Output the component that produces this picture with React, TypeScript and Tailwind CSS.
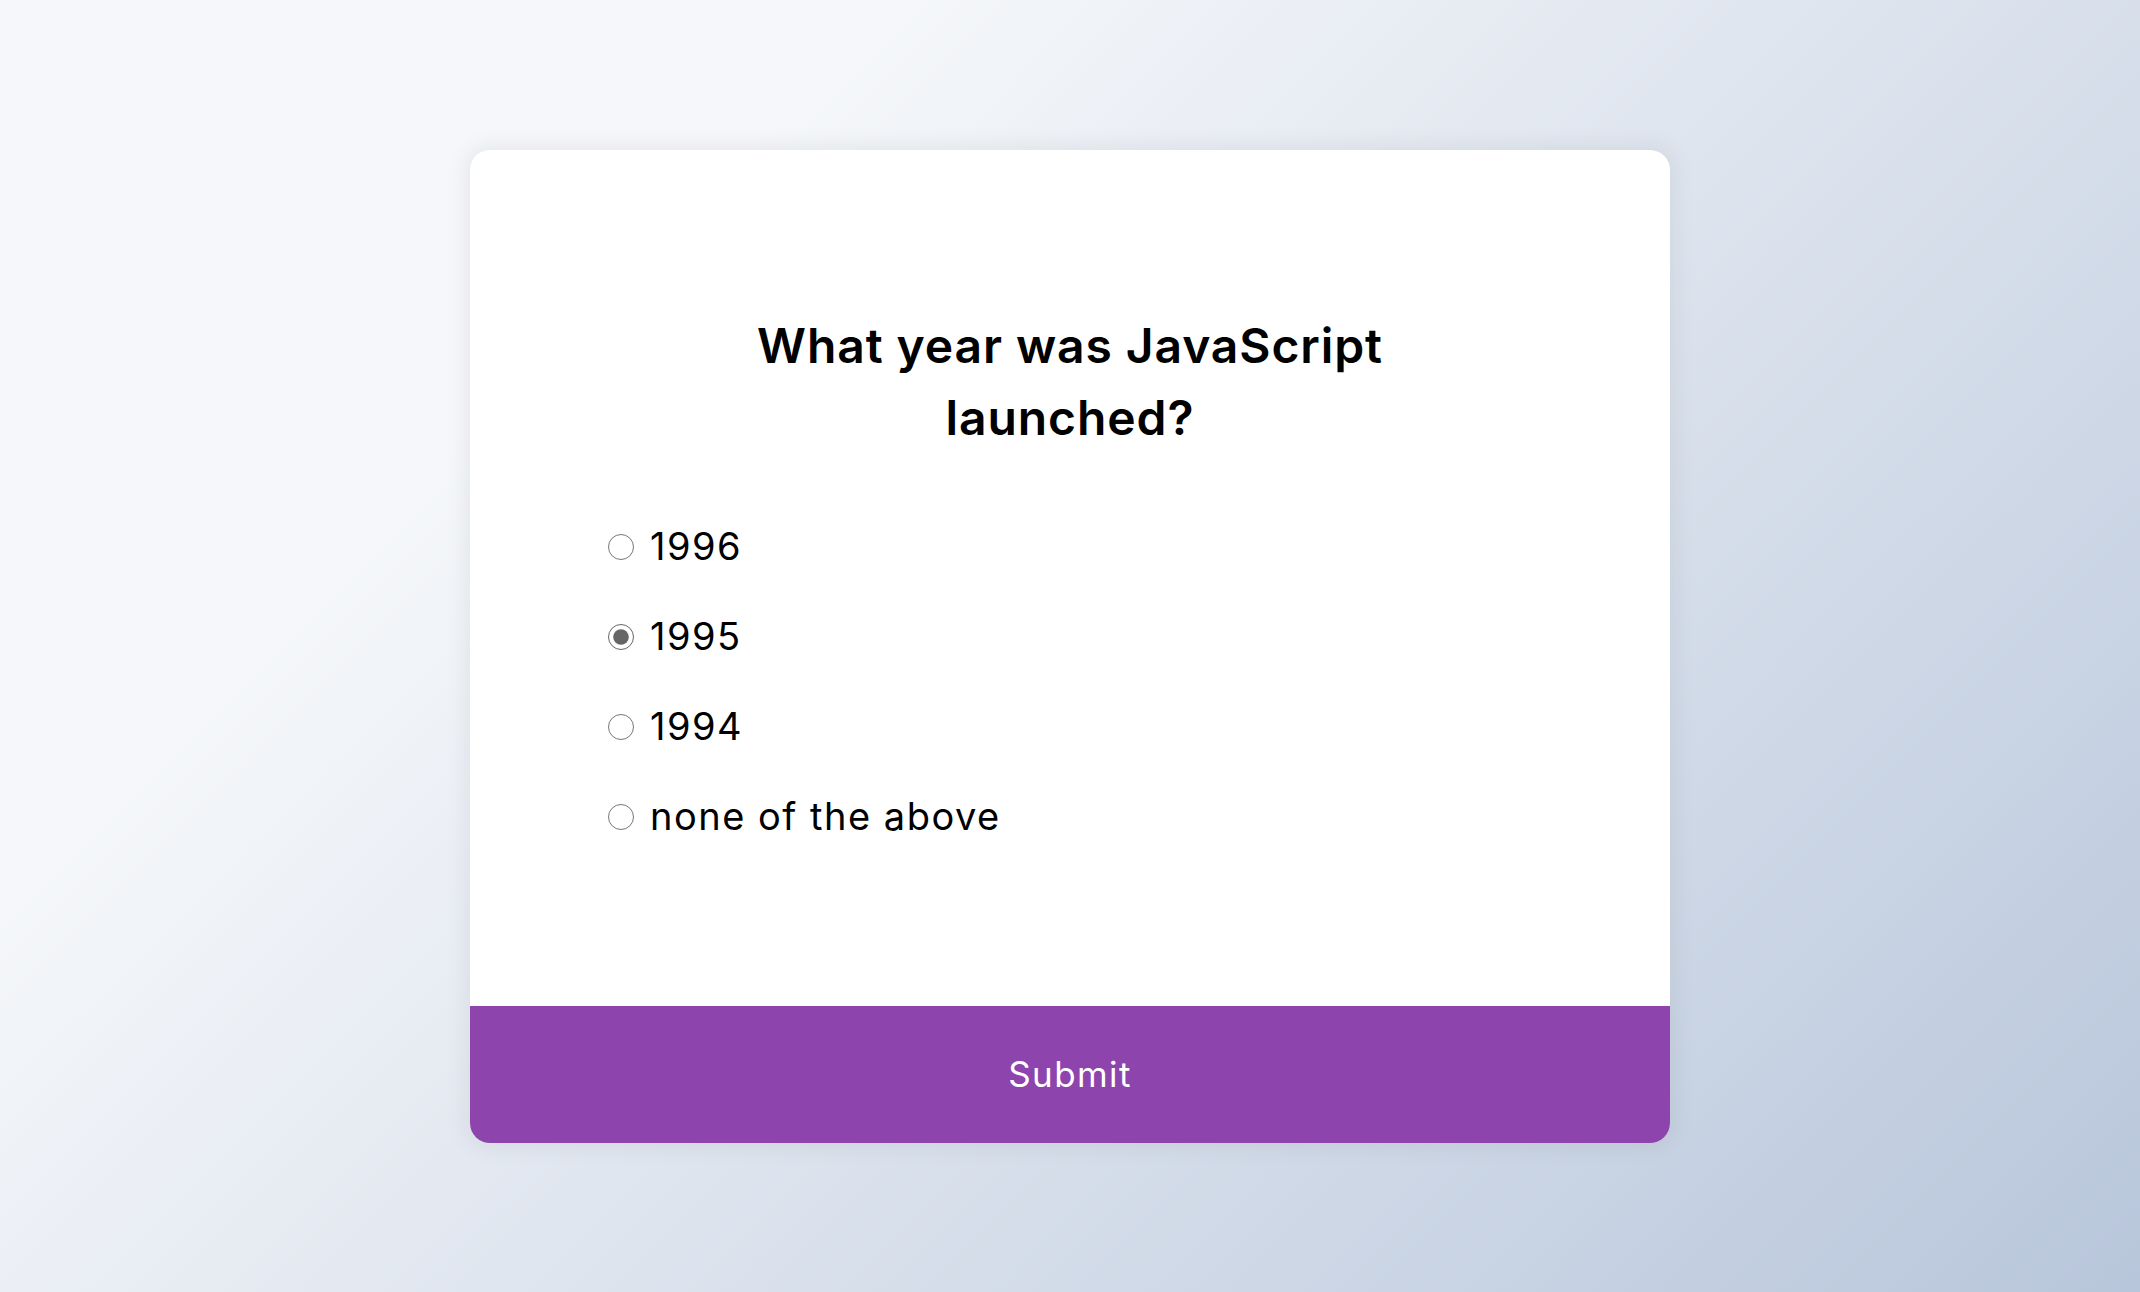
const options = [
  { id: 'a', label: '1996' },
  { id: 'b', label: '1995' },
  { id: 'c', label: '1994' },
  { id: 'd', label: 'none of the above' },
];

export default function App() {
  return (
    <div
      className="h-screen w-full flex items-center justify-center bg-[#b8c6db] bg-[linear-gradient(315deg,#b8c6db_0%,#f5f7fa_74%)]"
      style={{ fontFamily: 'Inter, "Noto Sans", sans-serif' }}
    >
      <div className="w-[1200px] bg-white rounded-[20px] overflow-hidden shadow-[0_0_20px_4px_rgba(100,100,100,0.1)]">
        <div className="p-[128px]">
          <h2 className="p-[32px] text-center text-[48px] leading-[72px] font-semibold text-black tracking-[0.9px]">
            What year was JavaScript
            <br />
            launched?
          </h2>
          <ul className="my-[32px]">
            {options.map((o) => (
              <li key={o.id} className="flex items-center h-[58px] my-[32px] first:mt-0 last:mb-0">
                <input
                  type="radio"
                  name="answer"
                  id={o.id}
                  defaultChecked={o.id === 'b'}
                  className="w-[26px] h-[26px] ml-[10px] mr-[16px] cursor-pointer accent-[#666666]"
                />
                <label htmlFor={o.id} className="text-[38px] text-black tracking-[1.5px] cursor-pointer">
                  {o.label}
                </label>
              </li>
            ))}
          </ul>
        </div>
        <button className="w-full h-[137px] bg-[#8e44ad] text-white text-[35px] tracking-[1.4px] cursor-pointer">
          Submit
        </button>
      </div>
    </div>
  );
}
